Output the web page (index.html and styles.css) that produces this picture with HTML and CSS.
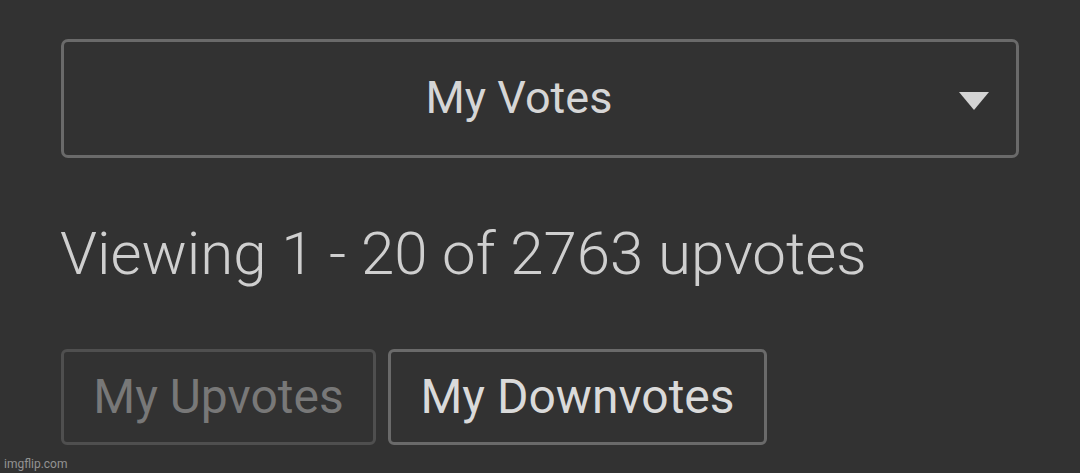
FILE: index.html
```html
<!DOCTYPE html>
<html>
<head>
<meta charset="utf-8">
<link rel="stylesheet" href="styles.css">
</head>
<body>
<div class="page">
  <div class="select">
    <span class="select-label">My Votes</span>
    <svg class="caret" width="30" height="18" viewBox="0 0 30 18"><polygon points="0,0 30,0 15,18" fill="#d4d4d4"/></svg>
  </div>
  <div class="summary">Viewing 1 - 20 of 2763 upvotes</div>
  <div class="tabs">
    <div class="tab tab-inactive">My Upvotes</div>
    <div class="tab tab-active">My Downvotes</div>
  </div>
</div>
<div class="watermark">imgflip.com</div>
</body>
</html>
```
FILE: styles.css
```css
html, body {
  margin: 0;
  padding: 0;
  background: #323232;
  height: 100%;
  overflow: hidden;
}
body {
  font-family: Roboto, "Liberation Sans", sans-serif;
  position: relative;
}
.page {
  padding: 39px 0 0 61px;
  width: 958px;
}
.select {
  box-sizing: border-box;
  width: 958px;
  height: 119px;
  border: 3px solid #6a6a6a;
  border-radius: 7px;
  padding-right: 42px;
  display: flex;
  align-items: center;
  justify-content: center;
  position: relative;
}
.select-label {
  font-size: 45px;
  color: #d6d6d6;
  line-height: 1;
  margin-top: -2px;
}
.caret {
  position: absolute;
  right: 27px;
  top: 50px;
}
.summary {
  margin-top: 60px;
  font-size: 60px;
  font-weight: 300;
  color: #cfcfcf;
  line-height: 72px;
  margin-left: -1px;
}
.tabs {
  display: flex;
  gap: 12px;
  margin-top: 59px;
}
.tab {
  box-sizing: border-box;
  height: 96px;
  border: 3px solid;
  border-radius: 6px;
  display: flex;
  align-items: center;
  justify-content: center;
  font-size: 48px;
  line-height: 1;
}
.tab-inactive {
  width: 315px;
  border-color: #4f4f4f;
  color: #787878;
}
.tab-active {
  width: 379px;
  border-color: #6a6a6a;
  color: #dadada;
}
.watermark {
  position: absolute;
  left: 4px;
  bottom: 2px;
  font-family: Roboto, "Liberation Sans", Arial, sans-serif;
  font-size: 12px;
  color: #929292;
}
```
